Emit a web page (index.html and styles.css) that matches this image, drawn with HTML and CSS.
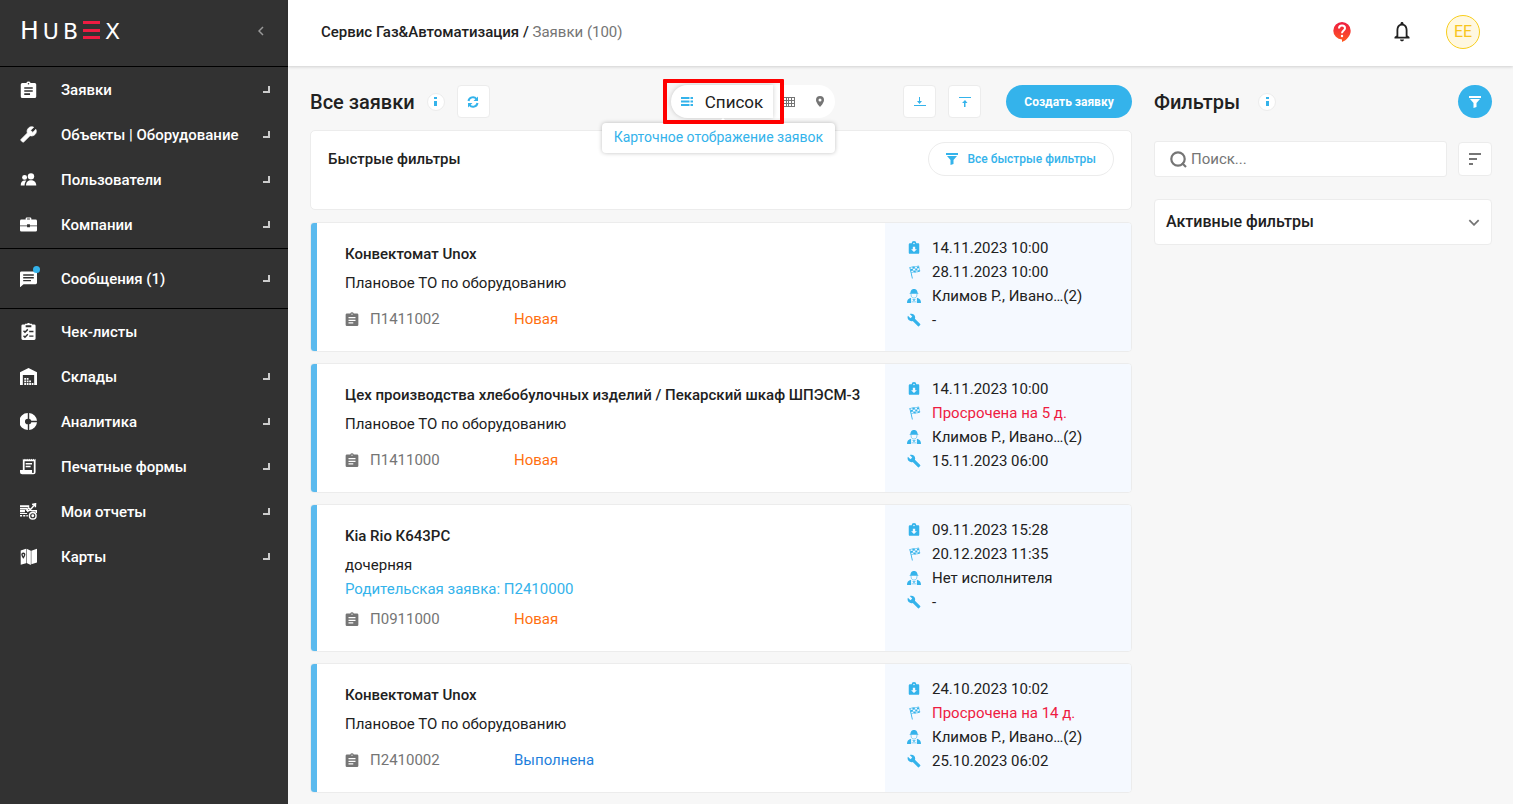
FILE: index.html
```html
<!DOCTYPE html>
<html lang="ru">
<head>
<meta charset="utf-8">
<title>HubEx — Заявки</title>
<meta name="viewport" content="width=device-width, initial-scale=1">
<link rel="stylesheet" href="styles.css">
</head>
<body>
<svg class="sprite" aria-hidden="true">
  <symbol id="clipboard" viewBox="1 0 22 22"><path d="M19 2.500h-4.200a3 3 0 0 0-5.600 0H4a2 2 0 0 0-2 2V20a2 2 0 0 0 2 2h16a2 2 0 0 0 2-2V4.500a2 2 0 0 0-2-2zm-7 0a1 1 0 1 1 0 2 1 1 0 0 1 0-2zm2 15.500H6.500v-2H14zm3.500-4h-11v-2h11zm0-4h-11V8h11z"/></symbol>
  <symbol id="wrench" viewBox="0 0 24 24"><path d="M22.700 19l-9.100-9.100c.9-2.300.4-5-1.500-6.900-2-2-5-2.400-7.400-1.300L9 6 6 9 1.600 4.700C.4 7.100.9 10.100 2.900 12.100c1.900 1.900 4.600 2.400 6.900 1.500l9.100 9.100c.4.4 1 .4 1.400 0l2.300-2.300c.5-.4.5-1.100.1-1.400z"/></symbol>
  <symbol id="wrench-up" viewBox="0 0 24 24"><path class="bold" transform="translate(24 0) scale(-1 1)" d="M22.700 19l-9.100-9.100c.9-2.300.4-5-1.500-6.900-2-2-5-2.400-7.400-1.300L9 6 6 9 1.600 4.700C.4 7.100.9 10.100 2.900 12.100c1.900 1.900 4.600 2.400 6.900 1.500l9.100 9.100c.4.4 1 .4 1.400 0l2.300-2.300c.5-.4.5-1.100.1-1.400z"/></symbol>
  <symbol id="people" viewBox="0 0 24 24"><circle cx="15.500" cy="7.500" r="4.500"/><circle cx="6.500" cy="9" r="3.500"/><path d="M8.500 20.500c0-5 3-7.500 7-7.500s7.500 2.500 7.500 7.500zM1 20.500c0-5 2-7 6-7 1 0 1.500 0 2 .3-1.500 1.400-2.500 3.500-2.500 6.700z"/></symbol>
  <symbol id="briefcase" viewBox="0 0 24 24"><path d="M8 5V3.500C8 2.500 8.800 2 9.500 2h5c.8 0 1.500.5 1.500 1.500V5h6a2 2 0 0 1 2 2v6.500H14v-2h-4v2H0V7a2 2 0 0 1 2-2zm2 0h4V3.500h-4zM0 14.500h10V16h4v-1.500h10V20a2 2 0 0 1-2 2H2a2 2 0 0 1-2-2z"/></symbol>
  <symbol id="chat" viewBox="0 0 24 24"><path d="M2 2h20a2 2 0 0 1 2 2v14a2 2 0 0 1-2 2H5l-5 4.500V4a2 2 0 0 1 2-2zm2.500 4v2h15V6zm0 4v2h15v-2zm0 4v2h11v-2z"/></symbol>
  <symbol id="checklist" viewBox="0 0 24 24"><path d="M20 2h-3V1h-3l-1-1h-2l-1 1H7v1H4a2 2 0 0 0-2 2v18a2 2 0 0 0 2 2h16a2 2 0 0 0 2-2V4a2 2 0 0 0-2-2zM8 3h8v3H8z"/><path class="cut" d="m5 11 2 2 4-4m-6 9 2 2 4-4m2-4h6m-6 6.500h6"/></symbol>
  <symbol id="warehouse" viewBox="0 0 24 24"><path d="M12 0 24 6v18h-4V10H4v14H0V6z"/><path d="M6 14h2.500v2.500H6zm0 3.500h2.500V20H6zM6 21h2.500v3H6zm3.500-7H12v2.500H9.500zm0 3.500H12V20H9.500zm0 3.500H12v3H9.500zm3.500-3.500h2.500V20H13zm0 3.500h2.500v3H13zm3.500 0H19v3h-2.500z"/></symbol>
  <symbol id="donut" viewBox="0 0 24 24"><path d="M11 0v8a4 4 0 0 0 0 8v8A12 12 0 0 1 11 0zm2 0a12 12 0 0 1 11 11h-8a4 4 0 0 0-3-3zm3 13h8a12 12 0 0 1-11 11v-8a4 4 0 0 0 3-3z"/></symbol>
  <symbol id="receipt" viewBox="0 0 24 24"><path d="m4 1 1.500 1.500L7 1l1.500 1.500L10 1l1.500 1.500L13 1l1.500 1.500L16 1l1.500 1.500L19 1l1.500 1.500L22 1v19a3 3 0 0 1-3 3H3a3 3 0 0 1-3-3v-3h4zm2.500 3.500V17H17v3a1 1 0 0 0 2.500 0V4.500zM8 7h9v2H8zm0 4h7v2H8z"/></symbol>
  <symbol id="reports" viewBox="0 0 24 24"><path d="M0 3h13v3H0zm0 4h10v2H0zm0 3h7v3H0zm0 4h10v1.500H0zm0 3h3v2H0zm4.500 0h3v2h-3zm4.500 0h2v2H9z"/><path class="line" d="m9 11 3-4 3 2 6-7m-4 .2L22 1l-.3 5M10 12l4-2 3 1"/><circle class="line" cx="18" cy="18" r="4.700"/><circle cx="18" cy="18" r="2"/><path class="line" d="M17 11h6v3"/></symbol>
  <symbol id="map" viewBox="0 0 24 24"><path d="M1 3.500 8.500 1v20.500L1 23.500zM9.300 1l6 3v20l-6-3zM16 4l8-3v19.500L16 23z"/><path class="cut" d="M4.700 7.500c-3 0-2 3.500 0 6 2-2.500 3-6 0-6z"/></symbol>
  <symbol id="refresh" viewBox="0 0 24 24"><path class="heavy" d="M3 10a9 9 0 0 1 16-4m2 8a9 9 0 0 1-16 4"/><path d="M22 1v9h-9zM2 23v-9h9z"/></symbol>
  <symbol id="list" viewBox="0 0 24 18"><path d="M0 0h17v4H0zm19 0h5v4h-5zM0 7h17v4H0zm19 0h5v4h-5zM0 14h17v4H0zm19 0h5v4h-5z"/></symbol>
  <symbol id="grid" viewBox="0 0 12 10"><path d="M0 0h12v10H0zm1 1v2h2V1zm3 0v2h1V1zm2 0v2h2V1zm3 0v2h2V1zM1 4v2h2V4zm3 0v2h1V4zm2 0v2h2V4zm3 0v2h2V4zM1 7v2h2V7zm3 0v2h1V7zm2 0v2h2V7zm3 0v2h2V7z"/></symbol>
  <symbol id="pin" viewBox="0 0 16 22"><path d="M8 0a8 8 0 0 0-8 8c0 6 8 14 8 14s8-8 8-14a8 8 0 0 0-8-8zm0 5a3 3 0 1 1 0 6 3 3 0 0 1 0-6z"/></symbol>
  <symbol id="download" viewBox="0 0 12 12"><path d="M0 9h12v1H0zM5 1h1v4h2L5.500 8 3 5h2z"/></symbol>
  <symbol id="upload" viewBox="0 0 12 12"><path d="M0 1h12v1H0zm5 10h1.500V7H8.500L6 4 3 7h2z"/></symbol>
  <symbol id="funnel" viewBox="0 0 12 12"><path d="M0 0h12v2H0zm1 3h10L7.500 7v4l-3 1V7z"/></symbol>
  <symbol id="sort" viewBox="0 0 12 12"><path d="M0 0h12v2H0zm0 5h8v2H0zm0 5h4v2H0z"/></symbol>
  <symbol id="search" viewBox="0 0 17 17"><circle class="line2" cx="8" cy="8" r="6.700"/><path class="line2" d="m12 12 4 4"/></symbol>
  <symbol id="chevron" viewBox="0 0 10 6"><path class="line1" d="m1 1 4 4 4-4"/></symbol>
  <symbol id="intake" viewBox="0 0 24 24"><path d="M20 4h-4a4 4 0 0 0-8 0H5a2 2 0 0 0-2 2v14a2 2 0 0 0 2 2h14a2 2 0 0 0 2-2V6a2 2 0 0 0-1-2zm-8-1a1.300 1.300 0 1 1 0 2.600A1.300 1.300 0 0 1 12 3zm0 16-5-5h3v-4h4v4h3z"/></symbol>
  <symbol id="flag" viewBox="0 0 24 24"><path d="m4 4 1.500-.5L10 23H8.500z"/><path class="thin" d="M5 4.500c6-3 8 0 15-3l2 9c-7 3-9 0-15 3"/><path d="m9 3 4-.3.8 3.300-4 .3zm8 0 3-1 .8 3.300-3.500.7zM6.500 7l3.300-.7.7 3.200-3.300.8zm7.300-1h3.500l.7 3.500h-3.500zM10.500 9.500h4l.7 3.300-4-.3zm7.500 0 3.500-1 .5 2.500-3.500 1z"/></symbol>
  <symbol id="worker" viewBox="0 0 24 24"><path d="M6 6c0-3.500 2-5 4-5.500V0h4v.5c2 .5 4 2 4 5.500l2 2H4z"/><path class="thin" d="M7 8v2c0 3.500 2 5.500 5 5.500s5-2 5-5.500V8M8 22h8"/><path d="M7 15v9H0c0-5 2-8 7-9zm10 0v9h7c0-5-2-8-7-9zM9 17.500h6L12 21z"/></symbol>
  <symbol id="bell" viewBox="0 0 16 20"><path d="M8 0C7 0 6.500.7 6.500 1.700 3.800 2.500 2.500 5 2.500 8v5.500L.5 15v1.500h15V15l-2-1.500V8c0-3-1.300-5.500-4-6.300C9.500.7 9 0 8 0zm0 3.500c2.300 0 3.700 2 3.700 4.500v6.700H4.300V8c0-2.500 1.400-4.500 3.700-4.500zM6 17.500h4c0 1-.9 1.800-2 1.800s-2-.8-2-1.800z"/></symbol>
</svg>

<div class="app">
  <aside class="sidebar">
    <div class="brand">
      <a class="logo" href="#" aria-label="HubEx"><span class="logo-big">H</span><span>U</span><span>B</span><i class="logo-bars"></i><span>X</span></a>
      <button class="collapse" type="button" aria-label="Свернуть меню"><svg><use href="#chevron"/></svg></button>
    </div>
    <nav>
      <ul class="menu">
        <li><a href="#"><svg><use href="#clipboard"/></svg>Заявки<i class="corner"></i></a></li>
        <li><a href="#"><svg><use href="#wrench-up"/></svg>Объекты | Оборудование<i class="corner"></i></a></li>
        <li><a href="#"><svg><use href="#people"/></svg>Пользователи<i class="corner"></i></a></li>
        <li><a href="#"><svg><use href="#briefcase"/></svg>Компании<i class="corner"></i></a></li>
      </ul>
      <ul class="menu menu-messages">
        <li><a href="#"><svg><use href="#chat"/></svg><i class="unread"></i>Сообщения (1)<i class="corner"></i></a></li>
      </ul>
      <ul class="menu menu-last">
        <li><a href="#"><svg><use href="#checklist"/></svg>Чек-листы</a></li>
        <li><a href="#"><svg><use href="#warehouse"/></svg>Склады<i class="corner"></i></a></li>
        <li><a href="#"><svg><use href="#donut"/></svg>Аналитика<i class="corner"></i></a></li>
        <li><a href="#"><svg><use href="#receipt"/></svg>Печатные формы<i class="corner"></i></a></li>
        <li><a href="#"><svg><use href="#reports"/></svg>Мои отчеты<i class="corner"></i></a></li>
        <li><a href="#"><svg><use href="#map"/></svg>Карты<i class="corner"></i></a></li>
      </ul>
    </nav>
  </aside>

  <div class="page">
    <header class="topbar">
      <div class="crumbs"><a href="#">Сервис Газ&amp;Автоматизация</a> / <span>Заявки (100)</span></div>
      <div class="top-actions">
        <button class="help" type="button" aria-label="Помощь"><svg viewBox="0 0 18 20"><defs><linearGradient id="hot" x1="0" y1="0" x2="0" y2="1"><stop offset="0" stop-color="#ee1c42"/><stop offset="1" stop-color="#ff5a1f"/></linearGradient></defs><path fill="url(#hot)" d="M9 0a8.700 8.700 0 0 0 0 17.400V20c4-1.500 8.700-6 8.700-11.300A8.700 8.700 0 0 0 9 0z"/><path class="question" d="M6 6.600C6 4.500 7.300 3.500 9 3.500s3 1 3 2.700c0 2.300-3 2.300-3 5"/><circle cx="9" cy="14" r="1.200" fill="#fff"/></svg></button>
        <button class="bell" type="button" aria-label="Уведомления"><svg><use href="#bell"/></svg></button>
        <button class="avatar" type="button">EE</button>
      </div>
    </header>

    <main class="content">
      <section class="requests">
        <div class="toolbar">
          <h1>Все заявки</h1>
          <button class="info" type="button" aria-label="Справка"><i></i></button>
          <button class="square" type="button" aria-label="Обновить"><svg><use href="#refresh"/></svg></button>
          <div class="views">
            <button class="view view-active" type="button"><svg class="list-icon"><use href="#list"/></svg>Список</button>
            <button class="view" type="button" aria-label="Таблица"><svg class="grid-icon"><use href="#grid"/></svg></button>
            <button class="view" type="button" aria-label="Карта"><svg class="pin-icon"><use href="#pin"/></svg></button>
            <div class="tooltip" role="tooltip">Карточное отображение заявок</div>
            <div class="highlight"></div>
          </div>
          <button class="square" type="button" aria-label="Скачать"><svg><use href="#download"/></svg></button>
          <button class="square" type="button" aria-label="Загрузить"><svg><use href="#upload"/></svg></button>
          <button class="create" type="button">Создать заявку</button>
        </div>

        <div class="quick">
          <h2>Быстрые фильтры</h2>
          <button class="pill" type="button"><svg><use href="#funnel"/></svg>Все быстрые фильтры</button>
        </div>

        <div class="cards">
          <article class="card">
            <div class="card-main">
              <h3>Конвектомат Unox</h3>
              <p>Плановое ТО по оборудованию</p>
              <div class="card-foot"><span class="number"><svg><use href="#clipboard"/></svg>П1411002</span><span class="status-new">Новая</span></div>
            </div>
            <ul class="card-side">
              <li><svg><use href="#intake"/></svg>14.11.2023 10:00</li>
              <li><svg><use href="#flag"/></svg>28.11.2023 10:00</li>
              <li><svg><use href="#worker"/></svg>Климов Р., Ивано…(2)</li>
              <li><svg><use href="#wrench"/></svg>-</li>
            </ul>
          </article>
          <article class="card">
            <div class="card-main">
              <h3>Цех производства хлебобулочных изделий / Пекарский шкаф ШПЭСМ-3</h3>
              <p>Плановое ТО по оборудованию</p>
              <div class="card-foot"><span class="number"><svg><use href="#clipboard"/></svg>П1411000</span><span class="status-new">Новая</span></div>
            </div>
            <ul class="card-side">
              <li><svg><use href="#intake"/></svg>14.11.2023 10:00</li>
              <li class="late"><svg><use href="#flag"/></svg>Просрочена на 5 д.</li>
              <li><svg><use href="#worker"/></svg>Климов Р., Ивано…(2)</li>
              <li><svg><use href="#wrench"/></svg>15.11.2023 06:00</li>
            </ul>
          </article>
          <article class="card card-child">
            <div class="card-main">
              <h3>Kia Rio К643РС</h3>
              <p>дочерняя</p>
              <a class="parent" href="#">Родительская заявка: П2410000</a>
              <div class="card-foot"><span class="number"><svg><use href="#clipboard"/></svg>П0911000</span><span class="status-new">Новая</span></div>
            </div>
            <ul class="card-side">
              <li><svg><use href="#intake"/></svg>09.11.2023 15:28</li>
              <li><svg><use href="#flag"/></svg>20.12.2023 11:35</li>
              <li><svg><use href="#worker"/></svg>Нет исполнителя</li>
              <li><svg><use href="#wrench"/></svg>-</li>
            </ul>
          </article>
          <article class="card">
            <div class="card-main">
              <h3>Конвектомат Unox</h3>
              <p>Плановое ТО по оборудованию</p>
              <div class="card-foot"><span class="number"><svg><use href="#clipboard"/></svg>П2410002</span><span class="status-done">Выполнена</span></div>
            </div>
            <ul class="card-side">
              <li><svg><use href="#intake"/></svg>24.10.2023 10:02</li>
              <li class="late"><svg><use href="#flag"/></svg>Просрочена на 14 д.</li>
              <li><svg><use href="#worker"/></svg>Климов Р., Ивано…(2)</li>
              <li><svg><use href="#wrench"/></svg>25.10.2023 06:02</li>
            </ul>
          </article>
        </div>
      </section>

      <aside class="filters">
        <div class="filters-head">
          <h2>Фильтры</h2>
          <button class="info" type="button" aria-label="Справка"><i></i></button>
          <button class="filter-toggle" type="button" aria-label="Применить фильтры"><svg><use href="#funnel"/></svg></button>
        </div>
        <div class="search-row">
          <label class="search"><svg><use href="#search"/></svg><input type="text" placeholder="Поиск..." aria-label="Поиск"></label>
          <button class="square sort" type="button" aria-label="Сортировка"><svg><use href="#sort"/></svg></button>
        </div>
        <button class="accordion" type="button">Активные фильтры<svg><use href="#chevron"/></svg></button>
      </aside>
    </main>
  </div>
</div>
</body>
</html>
```

FILE: styles.css
```css
:root {
  --blue: #34b3eb;
  --line: #ececec;
  --ink: #212121;
  --gray: #757575;
  --dark: #323232;
}

* { box-sizing: border-box; }

body {
  margin: 0;
  background: #f7f7f7;
  color: var(--ink);
  font-family: Roboto, "Liberation Sans", sans-serif;
  font-size: 15px;
  line-height: 24px;
}

h1, h2, h3, p, ul { margin: 0; padding: 0; font-size: inherit; font-weight: 500; }
p { font-weight: 400; }
ul { list-style: none; font-weight: 400; }
a { color: inherit; text-decoration: none; }
button { margin: 0; padding: 0; border: 0; background: none; color: inherit; font: inherit; cursor: pointer; }
svg { display: block; flex: none; fill: currentColor; }

.sprite { position: absolute; width: 0; height: 0; }
.cut { fill: none; stroke: var(--dark); stroke-width: 2; }
.line { fill: none; stroke: currentColor; stroke-width: 2; }
.thin { fill: none; stroke: currentColor; stroke-width: 1; }
.line1 { fill: none; stroke: currentColor; stroke-width: 1.5; }
.line2 { fill: none; stroke: currentColor; stroke-width: 2.2; }
.heavy { fill: none; stroke: currentColor; stroke-width: 4; }
.bold { stroke: currentColor; stroke-width: 1; }

.app { display: flex; min-height: 100vh; }

/* Sidebar */
.sidebar { flex: none; width: 288px; background: var(--dark); color: #fff; }
.brand { display: flex; align-items: center; justify-content: space-between; height: 67px; padding: 0 22px 4px 20px; border-bottom: 1px solid #000; }
.logo { display: flex; align-items: baseline; gap: 4px; font-family: "DejaVu Sans", sans-serif; font-size: 22px; font-weight: 400; line-height: 28px; }
.logo-big { font-size: 25px; }
.logo-bars { width: 17px; height: 18px; margin: 0 1px; background: linear-gradient(#ee1c42 3px, transparent 3px 8px, #ee1c42 8px 11px, transparent 11px 15px, #ee1c42 15px); }
.collapse { color: #999; }
.collapse svg { width: 10px; height: 6px; transform: rotate(90deg); }

.menu { padding-bottom: 1px; border-bottom: 1px solid #000; font-weight: 500; }
.menu-messages { padding: 7px 0; }
.menu-last { border-bottom: 0; }
.menu a { position: relative; display: flex; align-items: center; height: 45px; padding: 0 18px 0 20px; }
.menu svg { width: 17px; height: 17px; margin-right: 24px; }
.corner { width: 7px; height: 7px; margin-left: auto; border: solid #ccc; border-width: 0 2px 2px 0; }
.unread { position: absolute; top: 10px; left: 33px; width: 7px; height: 7px; border-radius: 50%; background: var(--blue); }

/* Top bar */
.page { flex: 1; min-width: 0; }
.topbar { display: flex; align-items: center; justify-content: space-between; height: 66px; padding: 0 33px 2px; background: #fff; box-shadow: 0 1px 3px rgba(0, 0, 0, .16); }
.crumbs { font-weight: 500; }
.crumbs span { color: var(--gray); font-weight: 400; }
.top-actions { display: flex; align-items: center; }
.help svg { width: 18px; height: 20px; }
.question { fill: none; stroke: #fff; stroke-width: 2; }
.bell { margin: 0 36px 0 43px; }
.bell svg { width: 16px; height: 20px; }
.avatar { width: 34px; height: 34px; border: 1px solid #f8ce1c; border-radius: 50%; background: #fff8e1; color: #f8c51c; font-size: 16px; }

/* Content */
.content { display: flex; gap: 22px; padding: 19px 21px 9px 22px; }
.requests { flex: 1; min-width: 0; }
.toolbar { display: flex; align-items: center; height: 33px; margin-bottom: 12px; }
h1, .filters-head h2 { font-size: 20px; }
.info { display: flex; justify-content: center; align-items: center; width: 18px; height: 18px; margin: 0 12px; border: 1px solid var(--line); border-radius: 50%; background: #fff; }
.info i { width: 3px; height: 9px; background: linear-gradient(var(--blue) 2px, transparent 2px, transparent 4px, var(--blue) 4px); }
.square { display: flex; align-items: center; justify-content: center; width: 33px; height: 33px; margin-right: 12px; border: 1px solid var(--line); border-radius: 4px; background: #fff; color: var(--blue); }
.square svg { width: 12px; height: 12px; }

.views { position: relative; display: flex; align-items: center; margin: 0 68px 0 auto; border-radius: 17px; background: #fff; color: var(--gray); }
.view { display: flex; align-items: center; justify-content: center; width: 31px; height: 31px; }
.view-active { gap: 12px; width: 102px; height: 33px; border-radius: 17px 0 0 17px; background: #fff; color: var(--ink); font-size: 17px; box-shadow: 0 0 5px rgba(0, 0, 0, .2); }
.list-icon { width: 12px; height: 9px; color: var(--blue); }
.grid-icon { width: 12px; height: 10px; }
.pin-icon { width: 8px; height: 11px; }
.tooltip { position: absolute; top: 38px; right: 0; padding: 2px 12px 4px; border-radius: 4px; background: #fff; color: var(--blue); font-size: 14px; white-space: nowrap; box-shadow: 0 0 4px rgba(0, 0, 0, .25); }
.tooltip::before { content: ""; position: absolute; top: -5px; left: 50%; border: solid transparent; border-width: 0 5px 5px; border-bottom-color: #fff; }
.highlight { position: absolute; top: -6px; left: -8px; width: 121px; height: 45px; border: 4px solid #f00; border-radius: 1px; }
.create { width: 126px; height: 33px; margin-left: 13px; border-radius: 17px; background: var(--blue); color: #fff; font-size: 12px; font-weight: 700; }

.quick { display: flex; align-items: flex-start; justify-content: space-between; min-height: 80px; margin-bottom: 12px; padding: 11px 17px; border: 1px solid var(--line); border-radius: 5px; background: #fff; }
.quick h2 { padding-top: 5px; }
.pill { display: flex; align-items: center; gap: 9px; height: 34px; padding: 0 17px; border: 1px solid var(--line); border-radius: 17px; color: var(--blue); font-size: 12px; font-weight: 500; }
.pill svg { width: 12px; height: 12px; }

.cards { display: grid; gap: 11px; }
.card { display: flex; border: 1px solid var(--line); border-radius: 4px; background: #fff; overflow: hidden; }
.card-main { flex: 1; min-width: 0; padding: 19px 12px 20px 28px; border-left: 6px solid #5bbaee; }
.card-main h3 { margin-bottom: 5px; }
.card-foot { display: flex; margin-top: 12px; }
.card-child .card-foot { margin-top: 6px; }
.number { display: flex; align-items: center; flex: none; gap: 11px; width: 169px; color: var(--gray); }
.number svg { width: 14px; height: 14px; }
.parent { display: block; color: var(--blue); }
.status-new { color: #ff6f0f; }
.status-done { color: #1e7fdc; }
.card-side { flex: none; width: 246px; padding: 13px 22px; background: #f5f9ff; }
.card-side li { display: flex; align-items: center; gap: 11px; }
.card-side svg { width: 14px; height: 14px; color: var(--blue); }
.late { color: #ee1c42; }

/* Filters */
.filters { flex: none; width: 338px; }
.filters-head { display: flex; align-items: center; height: 33px; margin-bottom: 23px; }
.filters-head .info { margin: 0 auto 0 18px; }
.filter-toggle { display: flex; align-items: center; justify-content: center; width: 34px; height: 33px; border-radius: 17px; background: var(--blue); color: #fff; }
.filter-toggle svg { width: 12px; height: 12px; }
.search-row { display: flex; align-items: center; gap: 11px; margin-bottom: 22px; }
.search { display: flex; flex: 1; align-items: center; gap: 4px; min-width: 0; height: 36px; padding: 0 15px; border: 1px solid var(--line); border-radius: 3px; background: #fff; color: var(--gray); }
.search svg { width: 17px; height: 17px; }
.search input { flex: 1; min-width: 0; padding: 0; border: 0; outline: 0; background: none; color: var(--ink); font: inherit; }
.search input::placeholder { color: var(--gray); opacity: 1; }
.sort { width: 34px; height: 34px; margin: 0; color: var(--gray); }
.accordion { display: flex; align-items: center; justify-content: space-between; width: 100%; height: 46px; padding: 0 11px; border: 1px solid var(--line); border-radius: 4px; background: #fff; font-size: 16px; font-weight: 500; }
.accordion svg { width: 12px; height: 7px; color: var(--gray); }
```
